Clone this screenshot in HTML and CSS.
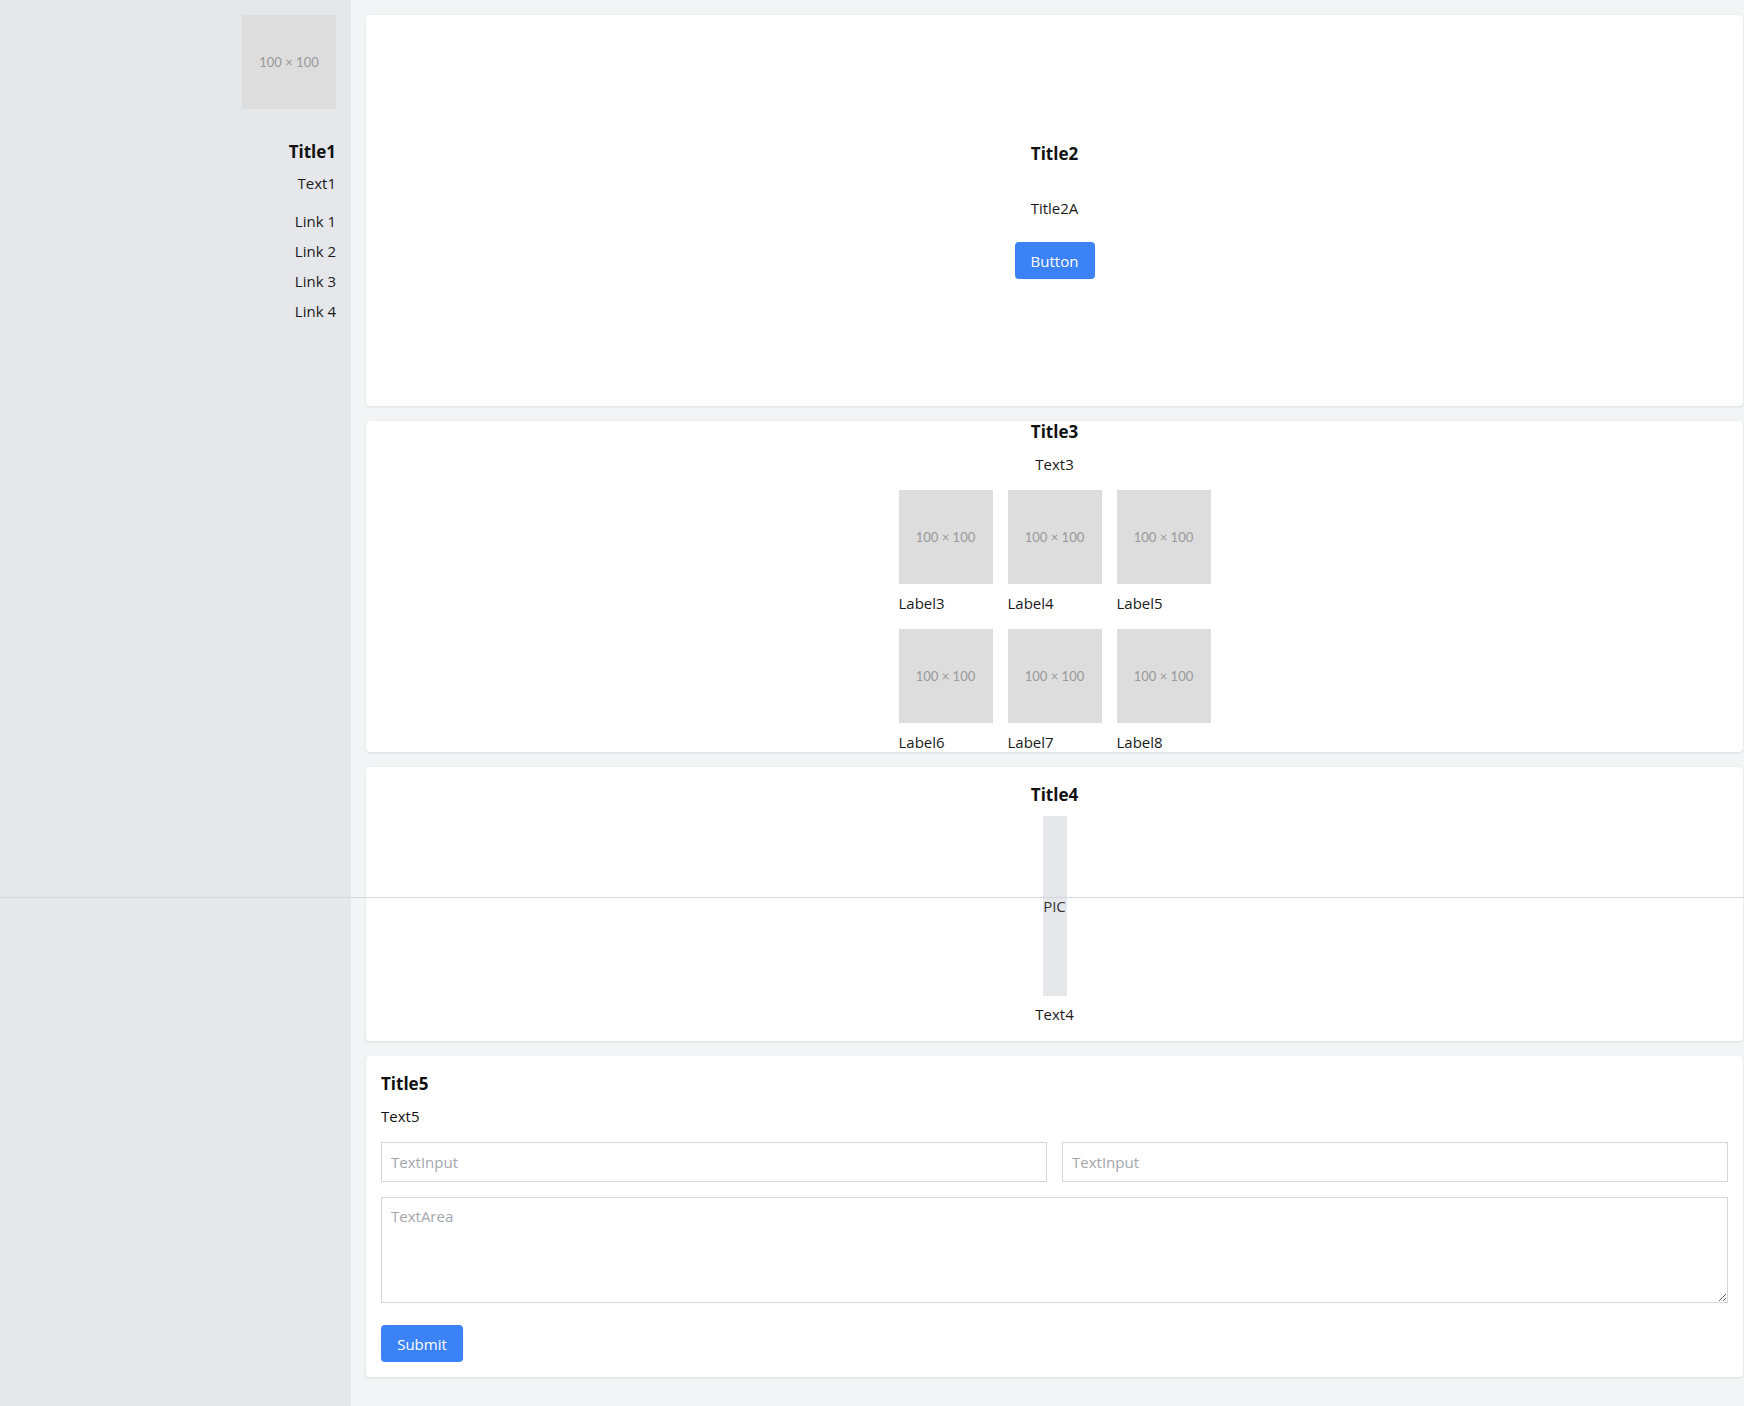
FILE: index.html
```html
<!DOCTYPE html>
<html lang="en">
<head>
<meta charset="utf-8">
<title>Layout</title>
<link rel="stylesheet" href="styles.css">
</head>
<body>
<div class="layout">
  <aside class="sidebar">
    <div class="ph">100 × 100</div>
    <h2 class="side-title">Title1</h2>
    <p class="side-text">Text1</p>
    <nav class="side-links">
      <a class="side-link">Link 1</a>
      <a class="side-link">Link 2</a>
      <a class="side-link">Link 3</a>
      <a class="side-link">Link 4</a>
    </nav>
  </aside>
  <main class="main">
    <section class="card hero">
      <h2 class="title">Title2</h2>
      <p class="hero-sub">Title2A</p>
      <button class="btn" type="button">Button</button>
    </section>

    <section class="card gallery">
      <h2 class="title gallery-title">Title3</h2>
      <p class="gallery-text">Text3</p>
      <div class="grid">
        <figure class="tile"><div class="ph">100 × 100</div><figcaption class="tile-label">Label3</figcaption></figure>
        <figure class="tile"><div class="ph">100 × 100</div><figcaption class="tile-label">Label4</figcaption></figure>
        <figure class="tile"><div class="ph">100 × 100</div><figcaption class="tile-label">Label5</figcaption></figure>
        <figure class="tile"><div class="ph">100 × 100</div><figcaption class="tile-label">Label6</figcaption></figure>
        <figure class="tile"><div class="ph">100 × 100</div><figcaption class="tile-label">Label7</figcaption></figure>
        <figure class="tile"><div class="ph">100 × 100</div><figcaption class="tile-label">Label8</figcaption></figure>
      </div>
    </section>

    <section class="card pic-card">
      <h2 class="title">Title4</h2>
      <div class="pic"><span class="pic-text">PIC</span></div>
      <p class="pic-caption">Text4</p>
    </section>

    <section class="card form-card">
      <h2 class="title">Title5</h2>
      <p class="form-text">Text5</p>
      <div class="input-row">
        <input class="field" type="text" placeholder="TextInput">
        <input class="field" type="text" placeholder="TextInput">
      </div>
      <textarea class="area" placeholder="TextArea"></textarea>
      <div class="submit-row"><button class="btn btn-submit" type="button">Submit</button></div>
    </section>
  </main>
</div>
<div class="rule"></div>
</body>
</html>
```

FILE: styles.css
```css
* { box-sizing: border-box; }

html, body {
  margin: 0;
  padding: 0;
}

body {
  font-family: "Open Sans", "Noto Sans", sans-serif;
  font-size: 15px;
  line-height: 24px;
  color: #1a1a1a;
  background: #f3f4f6;
  height: 1406px;
  overflow: hidden;
  position: relative;
}

h2, p, figure { margin: 0; }

.layout {
  display: flex;
  min-height: 1406px;
}

/* Sidebar */
.sidebar {
  width: 351px;
  flex: none;
  background: #e5e7eb;
  padding: 15px 15px 0 0;
  display: flex;
  flex-direction: column;
  align-items: flex-end;
  text-align: right;
}

.ph {
  width: 94px;
  height: 94px;
  background: #dddddd;
  color: #999999;
  font-family: Lato, "Open Sans", sans-serif;
  font-size: 13px;
  display: flex;
  align-items: center;
  justify-content: center;
}

.side-title {
  margin-top: 29px;
  font-size: 17px;
  line-height: 27px;
  font-weight: 700;
  color: #111111;
}

.side-text {
  margin-top: 6px;
  color: #1a1a1a;
}

.side-links {
  margin-top: 14px;
  display: flex;
  flex-direction: column;
  align-items: flex-end;
  gap: 6px;
}

.side-link {
  color: #1a1a1a;
  text-decoration: none;
}

/* Main */
.main {
  flex: 1;
  min-width: 0;
  padding: 15px 1px 15px 15px;
  display: flex;
  flex-direction: column;
  gap: 15px;
}

.card {
  background: #ffffff;
  border-radius: 4px;
  box-shadow: 0 1px 3px rgba(0, 0, 0, 0.09), 0 0 1px rgba(0, 0, 0, 0.06);
}

.title {
  font-size: 17px;
  line-height: 27px;
  font-weight: 700;
  color: #111111;
}

.btn {
  height: 37px;
  padding: 0 16px;
  border: none;
  border-radius: 4px;
  background: #3b82f6;
  color: #ffffff;
  font-family: inherit;
  font-size: 15px;
  line-height: 24px;
  cursor: pointer;
}

/* Card 1 */
.hero {
  height: 391px;
  padding-bottom: 3px;
  display: flex;
  flex-direction: column;
  align-items: center;
  justify-content: center;
  text-align: center;
}

.hero .title {
  margin-top: 1px;
}

.hero-sub {
  margin-top: 29px;
  color: #1a1a1a;
}

.hero .btn {
  margin-top: 22px;
  width: 80px;
  padding: 0;
}

/* Card 2 */
.gallery {
  height: 331px;
  display: flex;
  flex-direction: column;
  align-items: center;
  text-align: center;
}

.gallery-title {
  line-height: 22px;
}

.gallery-text {
  margin-top: 9px;
  color: #1a1a1a;
}

.grid {
  margin-top: 14px;
  display: grid;
  grid-template-columns: repeat(3, 94px);
  column-gap: 15px;
  row-gap: 14px;
}

.tile {
  text-align: left;
}

.tile-label {
  margin-top: 7px;
  color: #1a1a1a;
  white-space: nowrap;
}

/* Card 3 */
.pic-card {
  height: 274px;
  padding-top: 14px;
  display: flex;
  flex-direction: column;
  align-items: center;
}

.pic {
  margin-top: 8px;
  width: 24px;
  height: 180px;
  background: #e5e7eb;
  display: flex;
  align-items: center;
  justify-content: center;
}

.pic-text {
  color: #333333;
  white-space: nowrap;
}

.pic-caption {
  margin-top: 6px;
  color: #1a1a1a;
}

/* Card 4 */
.form-card {
  padding: 14px 15px 15px 15px;
  display: flex;
  flex-direction: column;
}

.form-text {
  margin-top: 7px;
  color: #111111;
}

.input-row {
  margin-top: 14px;
  display: flex;
  gap: 15px;
}

.field {
  flex: 1;
  min-width: 0;
  height: 40px;
  border: 1px solid #d4d6da;
  border-radius: 0;
  padding: 0 9px;
  font-family: inherit;
  font-size: 15px;
  color: #222222;
  background: #ffffff;
}

.area {
  margin-top: 15px;
  width: 100%;
  height: 106px;
  border: 1px solid #d4d6da;
  border-radius: 0;
  padding: 6px 9px;
  font-family: inherit;
  font-size: 15px;
  line-height: 24px;
  color: #222222;
  display: block;
}

.field::placeholder,
.area::placeholder {
  color: #a3a6ad;
}

.submit-row {
  margin-top: 22px;
  display: flex;
}

.btn-submit {
  width: 82px;
  padding: 0;
}

/* Thin horizontal rule across the page */
.rule {
  position: absolute;
  left: 0;
  right: 0;
  top: 897px;
  height: 1px;
  background: #d6d7da;
  pointer-events: none;
}
```
